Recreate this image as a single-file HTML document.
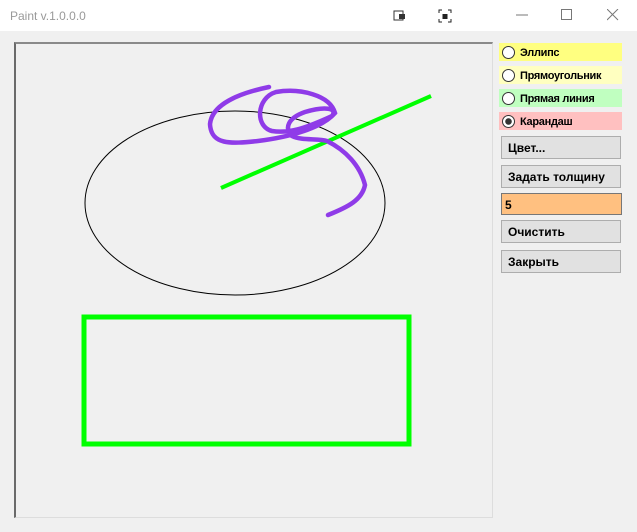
<!DOCTYPE html>
<html><head><meta charset="utf-8"><style>
body{margin:0;width:637px;height:532px;background:#f0f0f0;font-family:"Liberation Sans",sans-serif;position:relative;overflow:hidden}
.title{position:absolute;left:0;top:0;width:637px;height:31px;background:#fff}
.title span{position:absolute;left:10px;top:9px;font-size:12px;color:#999}
.canvas{position:absolute;left:14px;top:42px;width:479px;height:476px;border-left:2px solid #6a6a6a;border-top:2px solid #8a8a8a;border-right:1px solid #ddd;border-bottom:1px solid #ddd;box-sizing:border-box}
.rb{position:absolute;left:499px;width:123px;height:18px;font-size:11px;font-weight:bold;color:#000}
.rb i{position:absolute;left:3px;top:3px;width:11px;height:11px;border:1px solid #333;border-radius:50%;background:#fff}
.rb b{position:absolute;left:21px;top:4px;font-weight:bold;letter-spacing:-0.3px}
.btn{position:absolute;left:501px;width:118px;height:21px;background:#e1e1e1;border:1px solid #adadad;font-size:12px;font-weight:bold}
.btn span{position:absolute;left:6px;top:4px}
</style></head><body>
<div class="title"><span>Paint v.1.0.0.0</span>
<svg style="position:absolute;left:393px;top:10px" width="14" height="12"><rect x="1" y="1" width="9" height="9" fill="none" stroke="#333"/><rect x="6" y="4" width="6" height="5" fill="#333"/></svg>
<svg style="position:absolute;left:438px;top:9px" width="14" height="14"><path d="M1 4V1H4M10 1H13V4M13 10V13H10M4 13H1V10" stroke="#222" fill="none"/><rect x="4.5" y="5" width="5" height="5" fill="#222"/></svg>
<svg style="position:absolute;left:516px;top:14px" width="12" height="2"><path d="M0 1H12" stroke="#777"/></svg>
<svg style="position:absolute;left:561px;top:9px" width="12" height="12"><rect x="0.5" y="0.5" width="10" height="10" fill="none" stroke="#777"/></svg>
<svg style="position:absolute;left:607px;top:9px" width="12" height="12"><path d="M0 0L11 11M11 0L0 11" stroke="#777"/></svg>
</div>
<div class="canvas"></div>
<svg style="position:absolute;left:0;top:0" width="637" height="532">
<ellipse cx="235" cy="203" rx="150" ry="92" fill="none" stroke="#000" stroke-width="1"/>
<path d="M221 188L431 96" stroke="#00ff00" stroke-width="4"/>
<rect x="84" y="317" width="325" height="127" fill="none" stroke="#00ff00" stroke-width="5"/>
<path d="M269 87C240 93 212 104 210 124C211 145 230 144 258 141C290 137 322 128 335 113C330 95 300 88 276 92C256 98 255 127 272 131C290 134 308 127 332 116C338 108 325 106 305 112C288 118 284 128 292 136C302 141 318 138 327 141C345 150 360 165 365 185C362 200 348 207 328 215" fill="none" stroke="#8f3be8" stroke-width="4.5" stroke-linecap="round"/>
</svg>
<div class="rb" style="top:43px;background:#ffff80"><i></i><b>Эллипс</b></div>
<div class="rb" style="top:66px;background:#ffffc0"><i></i><b>Прямоугольник</b></div>
<div class="rb" style="top:89px;background:#c0ffc0"><i></i><b>Прямая линия</b></div>
<div class="rb" style="top:112px;background:#ffc0c0"><i style="background:radial-gradient(circle,#333 3px,#fff 3.5px)"></i><b>Карандаш</b></div>
<div class="btn" style="top:136px"><span>Цвет...</span></div>
<div class="btn" style="top:165px"><span>Задать толщину</span></div>
<div class="btn" style="top:193px;background:#ffc080;border-color:#777;height:20px;width:119px"><span style="left:3px">5</span></div>
<div class="btn" style="top:220px"><span>Очистить</span></div>
<div class="btn" style="top:250px"><span>Закрыть</span></div>
</body></html>
